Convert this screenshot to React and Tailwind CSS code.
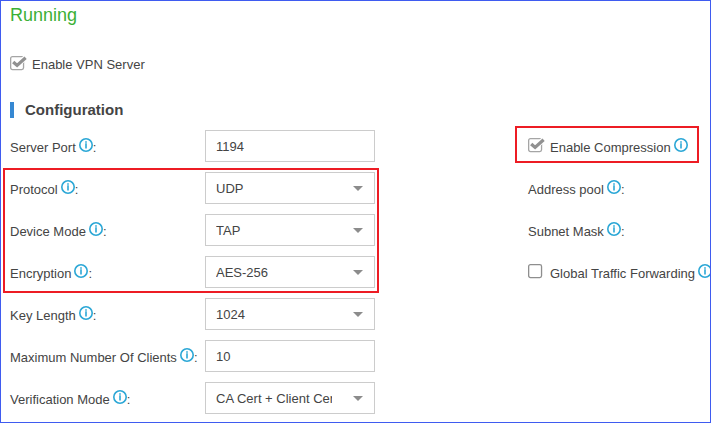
import React from 'react';

function InfoIcon({ className = '' }) {
  return (
    <svg className={`h-[14px] w-[14px] shrink-0 ${className}`} viewBox="0 0 14 14" fill="none">
      <circle cx="7" cy="7" r="6.2" stroke="#2ba7d6" strokeWidth="1.6" />
      <path d="M6.2 3.2h1.6v1.5H6.2zM6.2 5.2h1.6v5.2H6.2z" fill="#2ba7d6" />
    </svg>
  );
}

function CheckBox({ checked }) {
  return (
    <svg className="h-[16px] w-[18px] shrink-0" viewBox="0 0 18 16" fill="none">
      <rect x="0.65" y="0.65" width="12.9" height="12.9" rx="1.8" stroke={checked ? '#a5a5a5' : '#8e8e8e'} strokeWidth="1.3" />
      {checked && <path d="M3.4 6 7.1 9.4 15.4 1.6" stroke="#fff" strokeWidth="5" />}
      {checked && <path d="M3.2 5.9 7.1 9.4 15.6 1.7" stroke="#919191" strokeWidth="3.3" />}
    </svg>
  );
}

function Label({ text }) {
  return (
    <div className="flex h-8 items-center whitespace-nowrap">
      <span className="pt-[4px]">{text}</span>
      <InfoIcon className="mb-[2px] ml-[3px]" />
      <span className="pt-[4px]">:</span>
    </div>
  );
}

function Field({ label, value, select }) {
  return (
    <div className="flex h-8">
      <div className="w-[195px] shrink-0">
        <Label text={label} />
      </div>
      <div className="flex h-8 w-[170px] items-center justify-between border border-[#cccccc] bg-white pl-[10px] pr-[11px]">
        <span className="w-[116px] overflow-hidden whitespace-nowrap pt-[2px]">{value}</span>
        {select && (
          <svg className="mt-px h-[5px] w-[10px]" viewBox="0 0 10 5">
            <path d="M0 0h10L5 5z" fill="#8c8c8c" />
          </svg>
        )}
      </div>
    </div>
  );
}

export default function App() {
  return (
    <div className="relative h-[423px] w-[711px] overflow-hidden border border-[#3f5bf0] bg-white pl-[9px] font-['Liberation_Sans',Arial,sans-serif] text-[13px] leading-4 text-[#444444]">
      <div className="mt-[3px] h-[22px] text-[18px] leading-[22px] text-[#3bb035]">Running</div>
      <div className="mt-[30px] flex h-4 items-center">
        <CheckBox checked />
        <span className="ml-1 pt-[2px]">Enable VPN Server</span>
      </div>
      <div className="mt-[30px] flex h-4 items-center">
        <div className="h-4 w-1 bg-[#3688d2]" />
        <h2 className="ml-[11px] text-[15px] font-bold">Configuration</h2>
      </div>
      <div className="mt-3 flex">
        <div className="flex w-[518px] shrink-0 flex-col gap-[10px]">
          <Field label="Server Port" value="1194" />
          <Field label="Protocol" value="UDP" select />
          <Field label="Device Mode" value="TAP" select />
          <Field label="Encryption" value="AES-256" select />
          <Field label="Key Length" value="1024" select />
          <Field label="Maximum Number Of Clients" value="10" />
          <Field label="Verification Mode" value="CA Cert + Client Cert" select />
        </div>
        <div className="flex shrink-0 flex-col gap-[10px]">
          <div className="flex h-8 items-center whitespace-nowrap">
            <CheckBox checked />
            <span className="ml-1 pt-[4px]">Enable Compression</span>
            <InfoIcon className="mb-[2px] ml-[3px]" />
          </div>
          <Label text="Address pool" />
          <Label text="Subnet Mask" />
          <div className="flex h-8 items-center whitespace-nowrap">
            <CheckBox />
            <span className="ml-1 pt-[4px]">Global Traffic Forwarding</span>
            <InfoIcon className="mb-[2px] ml-[3px]" />
          </div>
        </div>
      </div>
      <div className="pointer-events-none absolute left-[2px] top-[167px] h-[125px] w-[376px] border-2 border-[#ed1c24]" />
      <div className="pointer-events-none absolute left-[514px] top-[125px] h-[37px] w-[184px] border-2 border-[#ed1c24]" />
    </div>
  );
}
